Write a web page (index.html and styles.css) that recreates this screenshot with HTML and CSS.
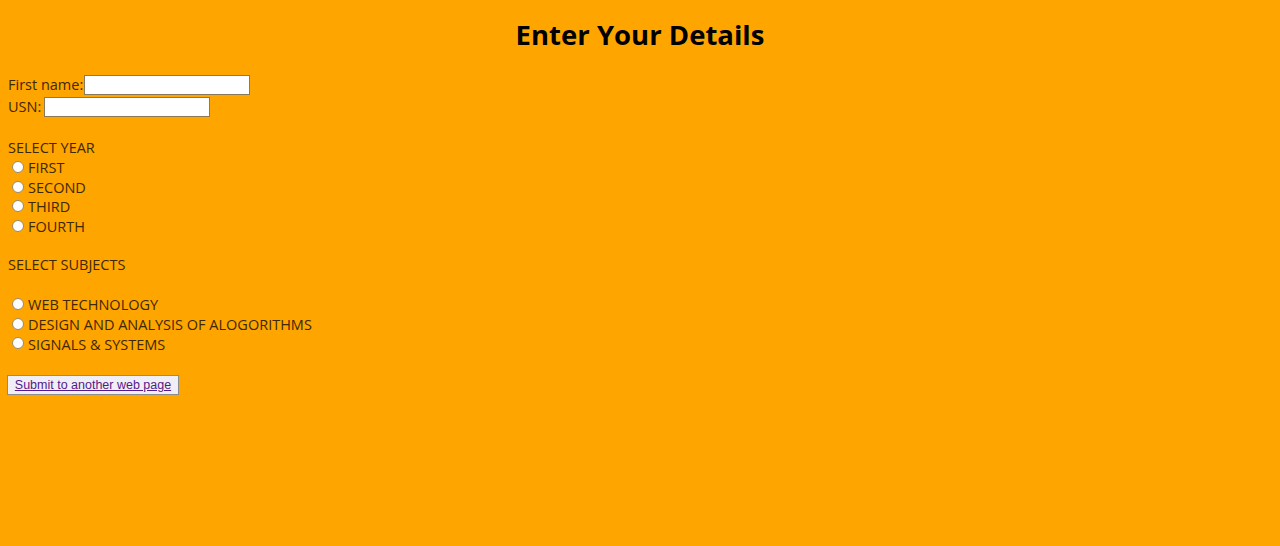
FILE: index.html
```html
<!DOCTYPE html>
<html>
<head>
<meta charset="utf-8">
<link rel="stylesheet" href="styles.css">
</head>
<body>
<h1 class="title">Enter Your Details</h1>
<form class="form">
  <div class="row field-row field-row-1"><label>First name:</label><span class="input input-first"></span></div>
  <div class="row field-row field-row-2"><label>USN:</label><span class="input"></span></div>
  <div class="gap"></div>
  <div class="row">SELECT YEAR</div>
  <div class="row radio-row"><span class="radio"></span>FIRST</div>
  <div class="row radio-row"><span class="radio"></span>SECOND</div>
  <div class="row radio-row"><span class="radio"></span>THIRD</div>
  <div class="row radio-row"><span class="radio"></span>FOURTH</div>
  <div class="gap"></div>
  <div class="row">SELECT SUBJECTS</div>
  <div class="gap"></div>
  <div class="row radio-row"><span class="radio"></span>WEB TECHNOLOGY</div>
  <div class="row radio-row"><span class="radio"></span>DESIGN AND ANALYSIS OF ALOGORITHMS</div>
  <div class="row radio-row"><span class="radio"></span>SIGNALS &amp; SYSTEMS</div>
  <div class="btn-wrap"><span class="button"><a class="btn-link" href="#">Submit to another web page</a></span></div>
</form>
</body>
</html>
```
FILE: styles.css
```css
html, body {
  margin: 0;
  padding: 0;
  background: #FFA500;
}
body {
  font-family: "Open Sans", "Noto Sans", sans-serif;
  font-size: 14.5px;
  color: #3e2800;
}
.title {
  margin: 0;
  padding-top: 17px;
  height: 74px;
  box-sizing: border-box;
  text-align: center;
  font-size: 27.5px;
  line-height: 36px;
  font-weight: 700;
  color: #000;
}
.form {
  padding-left: 8px;
}
.row {
  box-sizing: border-box;
  height: 19.6px;
  line-height: 19.6px;
  display: flex;
  align-items: center;
  white-space: nowrap;
}
.field-row {
  height: 22px;
  gap: 3px;
}
.field-row-1 {
  gap: 1px;
}
.field-row-2 {
  height: 22px;
}
.gap {
  height: 19.6px;
}
.input {
  display: inline-block;
  width: 166px;
  height: 20px;
  box-sizing: border-box;
  background: #fff;
  border: 1px solid #8a7a5a;
}
.radio-row {
  padding-left: 4px;
  padding-top: 2px;
}
.radio {
  display: inline-block;
  width: 12px;
  height: 12px;
  box-sizing: border-box;
  border-radius: 50%;
  background: #fff;
  border: 1px solid #9a8a6a;
  margin-right: 4px;
  margin-top: -2px;
}
.btn-wrap {
  padding-top: 21px;
}
.button {
  display: inline-flex;
  align-items: center;
  justify-content: center;
  width: 172px;
  height: 20px;
  box-sizing: border-box;
  margin-left: -1px;
  background: #f0eff6;
  border: 1px solid #8c8c8c;
}
.btn-link {
  font-family: "Liberation Sans", Arial, sans-serif;
  font-size: 12.5px;
  color: #551a8b;
  text-decoration: underline;
}
```
